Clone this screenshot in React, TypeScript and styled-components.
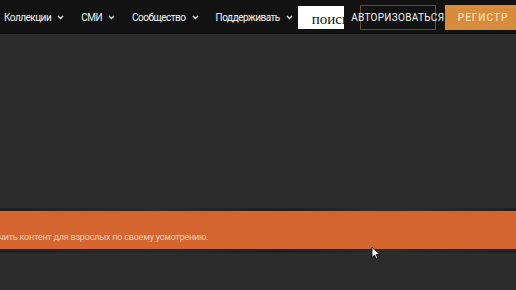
import React from 'react'
import styled, { createGlobalStyle } from 'styled-components'

const Global = createGlobalStyle`
  html, body {
    margin: 0;
    padding: 0;
    background: #2c2c2c;
    overflow: hidden;
  }
  body {
    font-family: Roboto, "Liberation Sans", sans-serif;
  }
`

const Page = styled.div`
  position: relative;
  width: 516px;
  height: 290px;
  background: #2c2c2c;
  overflow: hidden;
  display: flex;
  flex-direction: column;
`

const Nav = styled.nav`
  height: 34px;
  background: #121212;
  display: flex;
  align-items: center;
  padding-left: 4px;
  flex-shrink: 0;
`

const Menu = styled.ul`
  list-style: none;
  margin: 0;
  padding: 0;
  display: flex;
  align-items: center;
  gap: 17px;
  flex-shrink: 0;
`

const MenuItem = styled.li`
  display: flex;
  align-items: center;
  gap: 6px;
  color: #f2f2f2;
  font-size: 10px;
  letter-spacing: -0.5px;
  white-space: nowrap;
`

const Search = styled.div`
  margin-left: 5px;
  width: 46px;
  height: 23px;
  background: #fff;
  overflow: hidden;
  display: flex;
  align-items: flex-end;
  padding-left: 14px;
  box-sizing: border-box;
  font-family: "Liberation Serif", serif;
  font-size: 15px;
  color: #111;
  line-height: 19px;
  white-space: nowrap;
  flex-shrink: 0;
`

const LoginBox = styled.div`
  margin-left: 16px;
  width: 76px;
  height: 25px;
  box-sizing: border-box;
  border: 1px solid #6b4a2c;
  display: flex;
  align-items: center;
  justify-content: center;
  flex-shrink: 0;
`

const LoginText = styled.span`
  color: #f2f2f2;
  font-size: 10px;
  letter-spacing: 0.3px;
  white-space: nowrap;
`

const Register = styled.div`
  margin-left: 9px;
  width: 80px;
  height: 25px;
  background: #d98b3c;
  color: #f8dcb6;
  font-size: 10px;
  font-weight: 500;
  letter-spacing: 1px;
  display: flex;
  align-items: center;
  padding-left: 13px;
  box-sizing: border-box;
  flex-shrink: 0;
`

const Body = styled.main`
  flex: 1;
  display: flex;
  flex-direction: column;
  padding-top: 174px;
`

const BannerStrip = styled.div`
  background: linear-gradient(90deg, #1d2123 0%, #262a2b 30%, #1c2022 55%, #2a2d2e 75%, #1e2224 100%);
  padding: 3px 0 4px;
`

const Banner = styled.div`
  height: 38px;
  background: #d5652f;
  display: flex;
  align-items: center;
  padding-top: 14px;
  box-sizing: border-box;
  overflow: hidden;
`

const BannerText = styled.span`
  color: #f3cdb2;
  font-size: 9px;
  letter-spacing: -0.2px;
  white-space: nowrap;
  margin-left: -1px;
`

const Cursor = styled.svg`
  position: absolute;
  left: 371px;
  top: 246px;
`

const Chevron = () => (
  <svg width="7" height="5" viewBox="0 0 7 5">
    <path d="M1 1l2.5 2.5L6 1" fill="none" stroke="#e8e8e8" strokeWidth="1.4" />
  </svg>
)

const items = ['Коллекции', 'СМИ', 'Сообщество', 'Поддерживать']

export default function App() {
  return (
    <Page>
      <Global />
      <Nav>
        <Menu>
          {items.map((i) => (
            <MenuItem key={i}>
              {i}
              <Chevron />
            </MenuItem>
          ))}
        </Menu>
        <Search>поиск</Search>
        <LoginBox>
          <LoginText>АВТОРИЗОВАТЬСЯ</LoginText>
        </LoginBox>
        <Register>РЕГИСТР</Register>
      </Nav>
      <Body>
        <BannerStrip>
          <Banner>
            <BannerText>чить контент для взрослых по своему усмотрению.</BannerText>
          </Banner>
        </BannerStrip>
      </Body>
      <Cursor width="10" height="14" viewBox="0 0 10 14">
        <path d="M1 1v10.5l2.6-2.4 1.8 4 1.6-.7-1.8-3.9H8.8z" fill="#fff" stroke="#000" strokeWidth="0.8" />
      </Cursor>
    </Page>
  )
}
